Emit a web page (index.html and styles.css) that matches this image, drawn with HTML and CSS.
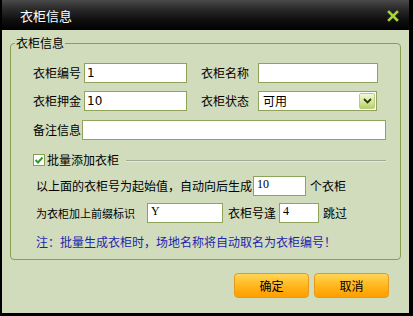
FILE: index.html
```html
<!DOCTYPE html>
<html lang="zh-CN">
<head>
    <meta charset="UTF-8">
    <title>衣柜信息</title>
    <link rel="stylesheet" href="styles.css">
</head>
<body>
    <div class="dialog">
        <div class="titlebar">
            <span class="title">衣柜信息</span>
            <svg class="close" width="12" height="12" viewBox="0 0 12 12">
                <path d="M2 2 L10 10 M10 2 L2 10" stroke="#a6d43c" stroke-width="2.6" stroke-linecap="square"/>
            </svg>
        </div>

        <div class="content">
            <fieldset class="group">
                <legend>衣柜信息</legend>

                <div class="row row1">
                    <label class="lbl">衣柜编号</label>
                    <input class="field w-short" type="text" value="1">
                    <label class="lbl lbl-right">衣柜名称</label>
                    <input class="field w-long" type="text" value="">
                </div>

                <div class="row row2">
                    <label class="lbl">衣柜押金</label>
                    <input class="field w-short" type="text" value="10">
                    <label class="lbl lbl-right">衣柜状态</label>
                    <div class="select">
                        <span class="select-text">可用</span>
                        <span class="select-btn">
                            <svg width="9" height="6" viewBox="0 0 9 6">
                                <path d="M1 1 L4.5 4.5 L8 1" fill="none" stroke="#2c3a10" stroke-width="1.8"/>
                            </svg>
                        </span>
                    </div>
                </div>

                <div class="row row3">
                    <label class="lbl lbl-tight">备注信息</label>
                    <input class="field w-full" type="text" value="">
                </div>

                <div class="row row4">
                    <span class="check">
                        <svg width="10" height="10" viewBox="0 0 10 10">
                            <path d="M1.5 5 L4 7.5 L8.5 2.5" fill="none" stroke="#2f9a2a" stroke-width="2"/>
                        </svg>
                    </span>
                    <span class="check-text">批量添加衣柜</span>
                    <span class="divider"></span>
                </div>

                <div class="row row5 indent">
                    <span>以上面的衣柜号为起始值，自动向后生成</span>
                    <input class="field small w-count" type="text" value="10">
                    <span class="after">个衣柜</span>
                </div>

                <div class="row row6 indent">
                    <span class="prefix-text">为衣柜加上前缀标识</span>
                    <input class="field small w-prefix" type="text" value="Y">
                    <span class="mid">衣柜号逢</span>
                    <input class="field small w-skip" type="text" value="4">
                    <span class="after">跳过</span>
                </div>

                <div class="row row7 indent">
                    <span class="note">注：批量生成衣柜时，场地名称将自动取名为衣柜编号！</span>
                </div>
            </fieldset>

            <div class="buttons">
                <button class="btn">确定</button>
                <button class="btn">取消</button>
            </div>
        </div>
    </div>
</body>
</html>
```

FILE: styles.css
```css
body {
    margin: 0;
    padding: 0;
    background: #000;
    font-family: "Noto Sans CJK SC", "Liberation Sans", sans-serif;
    font-size: 12px;
    color: #000;
}
.dialog {
    width: 413px;
    height: 316px;
    box-sizing: border-box;
    border-left: 2px solid #000;
    border-right: 4px solid #000;
    border-bottom: 3px solid #000;
    display: flex;
    flex-direction: column;
    background: #d1dcbc;
}
.titlebar {
    height: 30px;
    flex: none;
    display: flex;
    align-items: center;
    justify-content: space-between;
    padding: 0 10px 0 18px;
    background: linear-gradient(#4a4a4a, #2a2a2a 30%, #101010 65%, #000);
    color: #fff;
}
.title {
    font-size: 13px;
    line-height: 16px;
    margin-top: 1px;
}
.close {
    display: block;
    margin-top: 1px;
}
.content {
    flex: 1;
    display: flex;
    flex-direction: column;
}
.group {
    margin: 6px 8px 0 8px;
    padding: 9px 14px 4px 22px;
    border: 1px solid #8a9e52;
    border-radius: 4px;
    min-width: 0;
}
.group legend {
    padding: 0 1px;
    margin-left: -18px;
    line-height: 14px;
    font-size: 12px;
}
.row {
    display: flex;
    align-items: center;
    line-height: 14px;
    white-space: nowrap;
}
.row1, .row2 { height: 28px; }
.row3, .row4 { height: 30px; }
.row5 { height: 22px; }
.row6 { height: 32px; }
.row7 { height: 26px; }
.indent {
    padding-left: 3px;
}
.lbl {
    width: 48px;
    margin-right: 3px;
}
.lbl-right {
    margin-left: 14px;
    margin-right: 9px;
}
.lbl-tight {
    margin-right: 1px;
}
.field {
    box-sizing: border-box;
    height: 20px;
    margin: 0;
    padding: 0 2px;
    border: 1px solid #8fa45a;
    background: #fff;
    font-family: "DejaVu Sans", sans-serif;
    font-size: 12px;
    color: #000;
    outline: none;
}
.field.small {
    font-family: "Liberation Serif", serif;
    font-size: 12px;
    padding: 0 0 4px 3px;
}
.w-short { width: 103px; }
.w-long { width: 120px; }
.w-full { flex: 1; }
.w-count { width: 53px; margin-left: 1px; }
.w-prefix { width: 76px; }
.w-skip { width: 40px; }
.select {
    box-sizing: border-box;
    width: 119px;
    height: 20px;
    border: 1px solid #8fa45a;
    background: #fff;
    display: flex;
    align-items: center;
    justify-content: space-between;
    padding: 0 1px 0 4px;
}
.select-text {
    line-height: 14px;
}
.select-btn {
    box-sizing: border-box;
    width: 16px;
    height: 16px;
    border: 1px solid #b7cd84;
    border-radius: 2px;
    background: linear-gradient(#f2f9d8, #d4e89a 55%, #b6d164);
    display: flex;
    align-items: center;
    justify-content: center;
}
.check {
    box-sizing: border-box;
    width: 12px;
    height: 12px;
    border: 1px solid #8a9e52;
    background: #fff;
    display: flex;
    align-items: center;
    justify-content: center;
    margin-right: 2px;
}
.check-text {
    margin-right: 7px;
}
.divider {
    flex: 1;
    height: 1px;
    background: #a3a996;
    border-bottom: 1px solid #e4ead8;
    margin-top: 2px;
}
.after {
    margin-left: 4px;
}
.prefix-text {
    font-size: 11px;
    margin-right: 12px;
}
.mid {
    margin: 0 3px 0 5px;
}
.note {
    color: #1f1fb0;
}
.buttons {
    display: flex;
    justify-content: flex-end;
    gap: 5px;
    padding: 13px 20px 0 0;
}
.btn {
    width: 75px;
    height: 25px;
    border: 1px solid #e59a1c;
    border-radius: 4px;
    background: linear-gradient(#ffd656, #ffb81e 50%, #ff9d00);
    font-family: "Noto Sans CJK SC", sans-serif;
    font-size: 12px;
    line-height: 14px;
    color: #000;
    padding: 0;
}
```
